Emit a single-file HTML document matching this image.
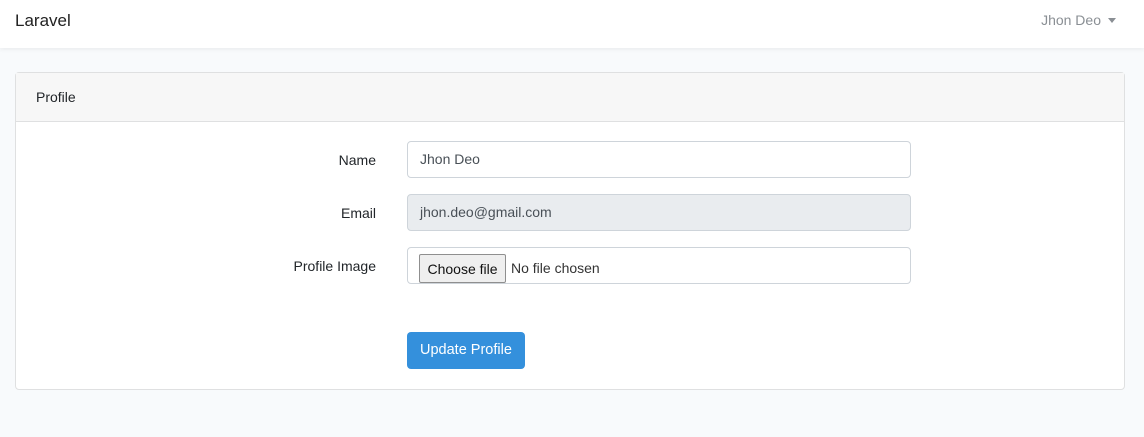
<!DOCTYPE html>
<html><head><style>
*{box-sizing:border-box;margin:0;padding:0}
body{width:1144px;height:437px;background:#f8fafc;font-family:"Liberation Sans",sans-serif;color:#212529;font-size:14px;position:relative;overflow:hidden}
.nav{position:absolute;left:0;top:0;width:1144px;height:48px;background:#fff;box-shadow:0 2px 4px rgba(0,0,0,.05)}
.brand{position:absolute;left:15px;top:11px;font-size:17px;color:#222}
.user{position:absolute;right:43px;top:12px;font-size:14px;color:#8a8f94}
.caret{position:absolute;right:28px;top:18px;width:0;height:0;border-left:4px solid transparent;border-right:4px solid transparent;border-top:5px solid #8a8f94}
.card{position:absolute;left:15px;top:72px;width:1110px;height:318px;background:#fff;border:1px solid #dfe0e1;border-radius:4px}
.hdr{height:49px;background:#f7f7f7;border-bottom:1px solid #dfe0e1;padding:16px 20px;font-size:14px}
.lbl{position:absolute;right:748px;font-size:14px;color:#212529}
.inp{position:absolute;left:391px;width:504px;height:37px;border:1px solid #ced4da;border-radius:4px;padding:9px 12px;font-size:14px;color:#495057}
.btn{position:absolute;left:391px;top:259px;width:118px;height:37px;background:#3490dc;border-radius:4px;color:#fff;font-size:14.5px;padding:10px 13px;white-space:nowrap}
.cf{position:absolute;left:11px;top:6px;height:29px;width:87px;border:1px solid #8f8f8f;background:#efefef;border-radius:2px;padding:6px 0;text-align:center;color:#111;font-size:14px;white-space:nowrap}
</style></head><body>
<div class="nav"><div class="brand">Laravel</div><div class="user">Jhon Deo</div><div class="caret"></div></div>
<div class="card">
<div class="hdr">Profile</div>
<div class="lbl" style="top:79px">Name</div>
<div class="inp" style="top:68px">Jhon Deo</div>
<div class="lbl" style="top:132px">Email</div>
<div class="inp" style="top:121px;background:#e9ecef">jhon.deo@gmail.com</div>
<div class="lbl" style="top:185px">Profile Image</div>
<div class="inp" style="top:174px"><span class="cf">Choose file</span><span style="position:absolute;left:103px;top:12px;color:#333">No file chosen</span></div>
<div class="btn">Update Profile</div>
</div>
</body></html>
